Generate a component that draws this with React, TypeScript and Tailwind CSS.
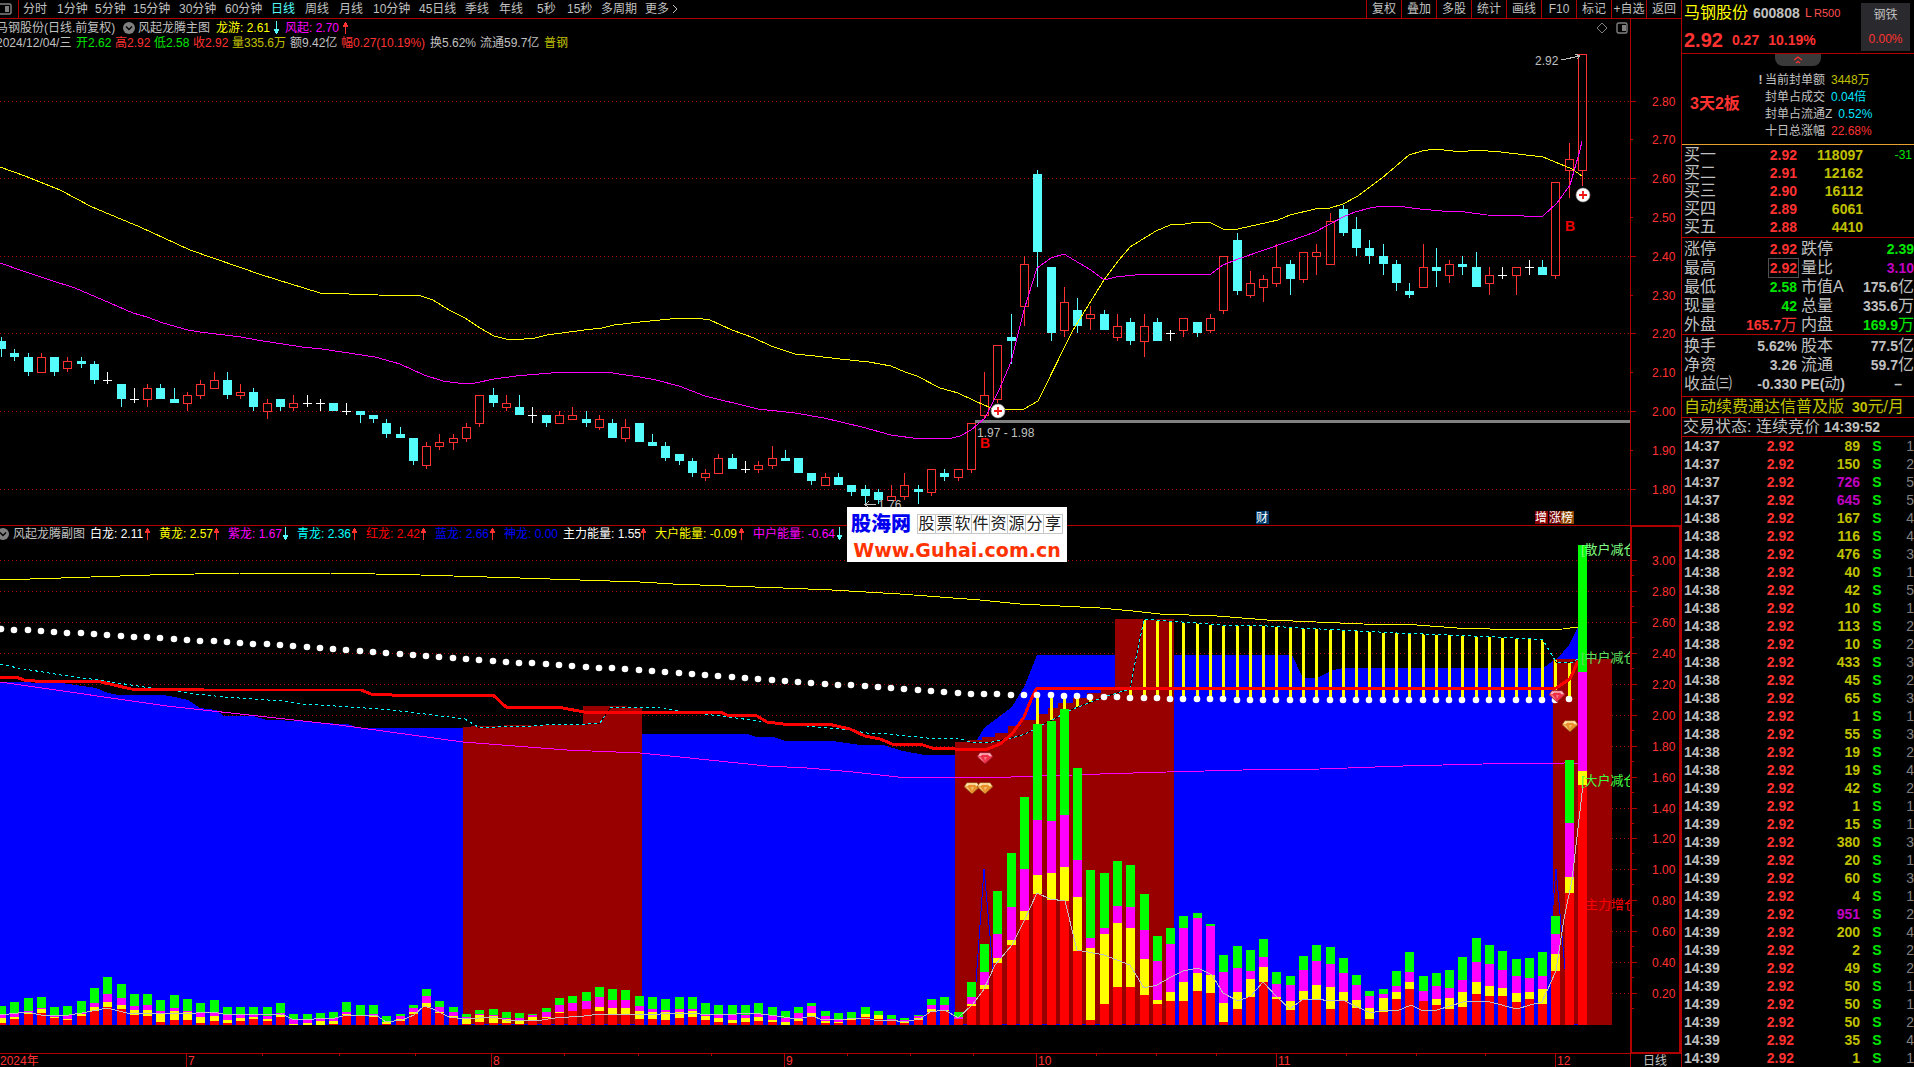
import type { ReactNode } from "react";

type Candle = [high: number, top: number, bottom: number, low: number, kind: "u" | "d" | "x"];
type Stack = [green: number, magenta: number, yellow: number, red: number];
type Point = [x: number, y: number];

const FONT = "font-['Liberation_Sans','Noto_Sans_CJK_SC',sans-serif]";

const PERIODS: [string, string][] = [
    ["分时", "w-[34px]"],
    ["1分钟", "w-[38px]"],
    ["5分钟", "w-[38px]"],
    ["15分钟", "w-[46px]"],
    ["30分钟", "w-[46px]"],
    ["60分钟", "w-[46px]"],
    ["日线", "w-[34px]"],
    ["周线", "w-[34px]"],
    ["月线", "w-[34px]"],
    ["10分钟", "w-[46px]"],
    ["45日线", "w-[46px]"],
    ["季线", "w-[34px]"],
    ["年线", "w-[38px]"],
    ["5秒", "w-[30px]"],
    ["15秒", "w-[34px]"],
    ["多周期", "w-[44px]"],
];

const TOOLS = ["复权", "叠加", "多股", "统计", "画线", "F10", "标记", "+自选", "返回"];

// prices in cents: high, body top, body bottom, low
const CANDLES: Candle[] = [
    [219, 218, 216, 214, "d"], [216, 215, 214, 213, "d"], [215, 214, 210, 209, "d"], [215, 214, 210, 210, "u"],
    [214, 214, 210, 209, "d"], [214, 213, 211, 210, "u"], [214, 213, 212, 211, "d"], [213, 212, 208, 207, "d"],
    [210, 208, 208, 207, "x"], [207, 207, 203, 201, "d"], [206, 203, 203, 202, "x"], [207, 206, 203, 201, "u"],
    [207, 206, 203, 203, "d"], [206, 203, 202, 202, "d"], [205, 204, 202, 200, "u"], [208, 207, 204, 203, "u"],
    [210, 208, 206, 206, "u"], [210, 208, 204, 203, "d"], [207, 205, 204, 203, "u"], [206, 205, 201, 200, "d"],
    [203, 202, 200, 198, "u"], [203, 203, 201, 200, "d"], [204, 202, 201, 200, "u"], [204, 202, 202, 201, "x"],
    [203, 202, 202, 200, "x"], [202, 202, 200, 200, "d"], [202, 200, 200, 199, "x"], [200, 200, 199, 197, "d"],
    [199, 199, 198, 197, "d"], [198, 197, 194, 193, "d"], [196, 194, 193, 193, "d"], [193, 193, 187, 186, "d"],
    [192, 191, 186, 185, "u"], [194, 192, 191, 190, "u"], [194, 193, 192, 190, "u"], [197, 196, 193, 192, "u"],
    [204, 204, 197, 196, "u"], [206, 204, 202, 201, "d"], [204, 202, 201, 200, "u"], [204, 201, 199, 199, "d"],
    [201, 199, 199, 197, "x"], [199, 199, 197, 196, "d"], [200, 199, 197, 197, "u"], [201, 199, 198, 198, "u"],
    [200, 198, 197, 196, "d"], [199, 198, 196, 195, "u"], [198, 197, 193, 193, "d"], [198, 196, 193, 192, "u"],
    [197, 197, 192, 192, "d"], [194, 192, 191, 191, "d"], [192, 191, 188, 187, "d"], [189, 189, 187, 186, "d"],
    [188, 187, 184, 183, "d"], [185, 184, 183, 182, "u"], [189, 188, 184, 184, "u"], [189, 188, 185, 185, "d"],
    [187, 185, 185, 184, "x"], [187, 186, 185, 184, "u"], [191, 188, 186, 185, "u"], [190, 188, 187, 187, "d"],
    [188, 188, 184, 184, "d"], [184, 184, 182, 181, "d"], [184, 183, 181, 181, "u"], [184, 183, 181, 181, "d"],
    [181, 181, 179, 178, "d"], [181, 180, 178, 176, "d"], [180, 179, 177, 176, "d"], [181, 178, 177, 177, "u"],
    [184, 181, 178, 177, "u"], [181, 180, 179, 176, "d"], [185, 185, 179, 178, "u"], [185, 184, 183, 182, "d"],
    [185, 185, 183, 182, "u"], [197, 197, 185, 184, "u"], [210, 204, 199, 198, "u"], [217, 217, 203, 202, "u"],
    [225, 219, 218, 212, "d"], [240, 238, 227, 222, "u"], [262, 261, 241, 232, "d"], [237, 237, 220, 218, "d"],
    [232, 228, 221, 219, "u"], [229, 226, 222, 220, "d"], [227, 225, 224, 221, "u"], [226, 225, 221, 221, "d"],
    [225, 222, 219, 218, "u"], [224, 223, 218, 217, "d"], [225, 222, 218, 214, "u"], [224, 223, 218, 218, "d"],
    [221, 220, 220, 218, "x"], [224, 224, 221, 219, "u"], [223, 223, 220, 219, "d"], [225, 224, 221, 220, "u"],
    [240, 240, 226, 225, "u"], [246, 244, 231, 230, "d"], [236, 233, 230, 229, "u"], [235, 234, 232, 228, "u"],
    [243, 237, 233, 232, "u"], [239, 238, 234, 230, "d"], [241, 241, 234, 233, "u"], [243, 241, 240, 235, "u"],
    [251, 249, 238, 238, "u"], [253, 252, 246, 245, "d"], [250, 247, 242, 240, "d"], [244, 242, 240, 238, "d"],
    [243, 240, 238, 235, "d"], [239, 238, 233, 231, "d"], [233, 231, 230, 229, "d"], [243, 237, 232, 232, "u"],
    [242, 237, 236, 232, "d"], [239, 238, 235, 233, "u"], [240, 238, 237, 235, "d"], [241, 237, 232, 232, "d"],
    [237, 235, 233, 230, "u"], [237, 235, 235, 234, "x"], [237, 237, 235, 230, "u"], [239, 237, 237, 235, "x"],
    [239, 237, 235, 235, "d"], [259, 259, 235, 234, "u"], [269, 265, 262, 255, "u"], [292, 292, 262, 258, "u"],
];

// cumulative column heights
const STACKS: Stack[] = [
    [19, 10, 7, 2], [23, 12, 8, 6], [27, 14, 12, 11], [28, 17, 16, 12], [18, 10, 8, 7], [19, 10, 6, 5],
    [24, 12, 11, 9], [37, 22, 18, 14], [48, 31, 23, 18], [41, 27, 20, 16], [31, 19, 15, 10], [31, 20, 15, 9],
    [25, 14, 12, 3], [30, 17, 14, 5], [26, 14, 13, 5], [22, 12, 8, 2], [25, 13, 9, 4], [18, 10, 5, 2],
    [18, 10, 7, 4], [18, 10, 8, 6], [18, 9, 6, 4], [22, 12, 10, 8], [11, 6, 1, 0], [11, 6, 2, 0],
    [12, 7, 4, 0], [13, 7, 4, 1], [23, 13, 11, 10], [20, 10, 10, 9], [20, 11, 10, 8], [9, 3, 3, 1],
    [11, 9, 6, 4], [20, 17, 13, 11], [36, 29, 22, 18], [24, 18, 13, 12], [18, 13, 9, 7], [11, 8, 6, 1],
    [15, 11, 10, 3], [16, 10, 9, 2], [13, 7, 6, 2], [12, 7, 5, 1], [11, 10, 8, 5], [17, 13, 8, 7],
    [27, 20, 13, 12], [29, 22, 14, 14], [33, 24, 16, 16], [38, 28, 18, 14], [36, 25, 17, 11], [35, 25, 17, 11],
    [29, 19, 14, 6], [28, 16, 13, 6], [26, 15, 13, 5], [28, 16, 13, 7], [28, 16, 14, 8], [22, 10, 9, 5],
    [20, 11, 7, 3], [20, 10, 5, 2], [20, 10, 7, 3], [22, 11, 8, 4], [18, 10, 5, 3], [14, 7, 3, 0],
    [18, 12, 6, 4], [22, 19, 12, 8], [14, 9, 4, 2], [12, 6, 3, 2], [13, 7, 6, 5], [18, 11, 11, 8],
    [14, 10, 10, 6], [10, 6, 5, 4], [7, 5, 3, 2], [10, 9, 7, 5], [26, 20, 16, 13], [28, 20, 15, 14],
    [13, 8, 6, 6], [43, 28, 21, 19], [81, 53, 40, 36], [134, 91, 67, 62], [172, 118, 85, 80], [228, 156, 114, 105],
    [301, 205, 150, 131], [304, 204, 152, 125], [316, 210, 158, 124], [257, 165, 128, 74], [155, 87, 77, 5], [152, 97, 91, 21],
    [164, 119, 102, 38], [160, 118, 97, 38], [131, 95, 66, 30], [89, 64, 25, 21], [97, 81, 33, 24], [109, 97, 43, 24],
    [112, 107, 52, 34], [101, 99, 50, 32], [70, 53, 22, 3], [79, 57, 33, 16], [75, 54, 46, 28], [86, 68, 58, 43],
    [53, 41, 28, 26], [49, 40, 24, 15], [69, 55, 34, 25], [80, 64, 40, 25], [78, 61, 38, 16], [67, 52, 33, 24],
    [50, 40, 25, 17], [34, 29, 17, 6], [36, 31, 27, 13], [54, 39, 33, 26], [73, 53, 43, 36], [49, 34, 24, 24],
    [52, 39, 26, 20], [55, 37, 27, 16], [68, 45, 33, 18], [87, 63, 43, 31], [80, 61, 39, 29], [74, 55, 37, 29],
    [66, 49, 32, 23], [67, 47, 33, 26], [73, 49, 36, 21], [109, 91, 71, 54], [265, 202, 148, 132], [480, 353, 254, 240],
];

const SLOW_LINE =
    "0,167 25,176 60,190 92,207 140,227 190,250 262,275 320,293 378,295 421,296 433,300 449,310 465,318 480,328 494,336 506,339 524,339 535,338 547,335 584,330 602,328 614,325 640,322 670,319 696,318 710,320 732,330 754,338 771,346 795,354 815,356 840,359 869,362 891,366 905,372 917,376 940,388 958,393 975,401 991,408 1005,409 1024,409 1038,401 1073,330 1104,280 1119,260 1130,247 1156,231 1170,225 1185,224 1198,222 1211,223 1223,229 1238,229 1278,220 1290,215 1315,209 1330,208 1343,204 1358,196 1382,178 1409,155 1422,151 1435,149 1462,152 1475,150 1501,152 1543,157 1560,164 1572,169 1582,176";
const FAST_LINE =
    "0,263 20,270 50,280 75,288 103,300 133,313 147,317 163,323 188,330 200,332 241,337 257,340 302,347 322,349 375,357 400,364 424,375 443,381 465,384 475,383 494,379 516,376 539,374 563,372 606,372 626,375 640,377 656,380 679,386 705,396 758,409 795,413 824,418 862,427 891,435 920,439 952,438 960,436 971,430 985,418 999,390 1011,362 1024,310 1037,268 1051,258 1064,254 1079,263 1091,270 1104,280 1116,277 1144,274 1171,275 1211,274 1223,265 1238,259 1290,241 1315,232 1343,217 1355,212 1370,208 1382,206 1397,206 1420,209 1442,211 1465,212 1487,215 1524,216 1543,216 1557,203 1570,185 1580,150 1582,141";

const BLUE_AREA =
    "0,682 61,683 82,686 96,688 108,693 118,695 163,695 175,697 188,700 200,708 216,710 224,716 253,716 267,720 302,721 318,723 347,724 359,728 642,728 642,734 747,734 757,737 773,737 785,741 833,741 860,745 883,745 903,751 925,755 970,755 977,740 984,728 1012,707 1025,685 1037,655 1292,655 1303,678 1317,678 1333,670 1343,668 1543,668 1553,661 1557,659 1569,645 1578,627 1583,627 1583,1025 0,1025";
const RED_AREAS = [
    "463,1025 463,727 478,726 531,725 583,724 583,706 611,706 642,707 642,1025",
    "955,1025 955,742 968,742 968,740 982,740 982,737 995,737 995,733 1008,733 1008,726 1021,726 1021,720 1037,720 1037,714 1048,714 1048,708 1058,708 1058,703 1073,703 1073,698 1087,698 1087,693 1101,693 1101,690 1115,690 1115,619 1174,619 1174,1025",
    "1553,1025 1553,659 1612,659 1612,1025",
];

const DRAGON_YELLOW =
    "0,580 61,578 150,575 240,573 330,573 420,575 520,578 640,582 673,584 726,586 783,588 832,590 900,594 980,600 1020,604 1060,606 1100,608 1133,611 1160,614 1217,616 1267,620 1293,621 1363,624 1417,625 1457,628 1523,630 1563,629 1578,627";
const DRAGON_RED =
    "0,677 16,677 24,680 35,681 96,681 110,684 131,689 204,690 361,690 371,694 392,695 493,695 506,707 563,708 584,712 720,712 727,715 757,716 767,722 783,724 828,724 850,729 865,736 880,739 892,744 920,744 932,748 955,749 985,750 1000,744 1012,734 1024,717 1033,695 1037,688 1556,688 1570,679 1578,661";
const DRAGON_PURPLE =
    "0,682 167,706 294,720 339,725 463,742 567,750 640,753 680,757 767,766 807,768 853,772 898,777 933,777 990,778 1033,776 1073,775 1100,774 1167,772 1243,770 1320,769 1403,766 1483,764 1565,763 1578,764";
const DRAGON_CYAN: Point[] = [
    [0, 664], [18, 668], [61, 675], [98, 680], [131, 685], [151, 688], [176, 691], [196, 694], [224, 697], [282, 701],
    [302, 704], [351, 707], [392, 710], [433, 715], [465, 719], [478, 727], [498, 727], [531, 726], [555, 724],
    [588, 724], [600, 723], [611, 707], [660, 707], [673, 710], [698, 713], [712, 715], [767, 722], [807, 726],
    [850, 730], [867, 733], [887, 734], [907, 736], [927, 738], [958, 738], [970, 742], [987, 743], [1012, 738],
    [1025, 734], [1050, 721], [1073, 709], [1104, 697], [1130, 689], [1137, 653], [1144, 619], [1167, 621],
    [1197, 623], [1220, 625], [1267, 626], [1300, 628], [1360, 631], [1397, 633], [1450, 635], [1497, 637],
    [1533, 639], [1543, 640], [1556, 662], [1573, 662], [1578, 659],
];
const DRAGON_WHITE: Point[] = [
    [0, 629], [94, 634], [187, 640], [300, 646], [400, 654], [480, 660], [585, 667], [640, 670], [787, 681], [973, 694],
    [1037, 695], [1104, 697], [1144, 698], [1183, 699], [1290, 700], [1543, 700], [1570, 699],
];
const ENERGY_LINE =
    "0,1015 27,1012 41,1015 69,1015 82,1013 107,1008 127,1013 143,1014 167,1013 196,1013 212,1012 229,1015 282,1014 292,1019 314,1019 335,1018 347,1015 376,1015 386,1022 402,1020 414,1015 424,1006 433,1009 449,1017 465,1019 494,1017 506,1020 535,1021 555,1018 584,1016 600,1014 626,1014 640,1015 680,1013 720,1015 753,1013 777,1016 797,1019 812,1016 823,1020 847,1019 867,1018 877,1021 892,1020 903,1022 920,1019 930,1012 945,1010 958,1018 973,1004 984,989 995,965 1012,945 1025,919 1037,893 1050,899 1065,901 1077,950 1104,955 1117,960 1130,965 1144,988 1157,985 1171,977 1183,971 1198,968 1212,975 1223,993 1238,1001 1251,996 1263,982 1277,997 1290,1009 1303,999 1317,999 1330,1001 1343,1000 1357,1007 1371,1013 1383,1010 1397,1011 1411,1005 1423,1011 1437,1010 1463,1002 1477,1001 1490,1002 1517,1009 1530,1005 1542,1002 1556,971 1564,919 1572,880 1583,785";

const LEGEND: [string, string, string, "up" | "down" | ""][] = [
    ["白龙: 2.11", "text-white", "w-[69px]", "up"],
    ["黄龙: 2.57", "text-[#ffff00]", "w-[69px]", "up"],
    ["紫龙: 1.67", "text-[#ff00ff]", "w-[69px]", "down"],
    ["青龙: 2.36", "text-[#00ffff]", "w-[69px]", "up"],
    ["红龙: 2.42", "text-[#ff0000]", "w-[69px]", "up"],
    ["蓝龙: 2.66", "text-[#0000ff]", "w-[69px]", "up"],
    ["神龙: 0.00", "text-[#0000ff]", "w-[59px]", ""],
    ["主力能量: 1.55", "text-white", "w-[92px]", "up"],
    ["大户能量: -0.09", "text-[#ffff00]", "w-[98px]", "up"],
    ["中户能量: -0.64", "text-[#ff00ff]", "w-[98px]", "down"],
];

const BIDS = [
    ["买一", "2.92", "118097", "-31"],
    ["买二", "2.91", "12162", ""],
    ["买三", "2.90", "16112", ""],
    ["买四", "2.89", "6061", ""],
    ["买五", "2.88", "4410", ""],
];

const RED = "text-[#ff3232]";
const GREEN = "text-[#00e600]";
const GREY = "text-[#c0c0c0]";
const GOLD = "text-[#c0c000]";
const PURPLE = "text-[#c000c0]";

const STATS = [
    ["涨停", "2.92", RED, "跌停", "2.39", GREEN],
    ["最高", "2.92", RED, "量比", "3.10", PURPLE],
    ["最低", "2.58", GREEN, "市值A", "175.6亿", GREY],
    ["现量", "42", GREEN, "总量", "335.6万", GREY],
    ["外盘", "165.7万", RED, "内盘", "169.9万", GREEN],
];
const FUNDAMENTALS = [
    ["换手", "5.62%", GREY, "股本", "77.5亿", GREY],
    ["净资", "3.26", GREY, "流通", "59.7亿", GREY],
    ["收益㈢", "-0.330", GREY, "PE(动)", "–", GREY],
];

const TRADES: [string, number, number][] = [
    ["14:37", 89, 1], ["14:37", 150, 2], ["14:37", 726, 5], ["14:37", 645, 5], ["14:38", 167, 4], ["14:38", 116, 4],
    ["14:38", 476, 3], ["14:38", 40, 1], ["14:38", 42, 5], ["14:38", 10, 1], ["14:38", 113, 2], ["14:38", 10, 2],
    ["14:38", 433, 3], ["14:38", 45, 2], ["14:38", 65, 3], ["14:38", 1, 1], ["14:38", 55, 3], ["14:38", 19, 2],
    ["14:38", 19, 4], ["14:39", 42, 2], ["14:39", 1, 1], ["14:39", 15, 1], ["14:39", 380, 3], ["14:39", 20, 1],
    ["14:39", 60, 3], ["14:39", 4, 1], ["14:39", 951, 2], ["14:39", 200, 4], ["14:39", 2, 2], ["14:39", 49, 2],
    ["14:39", 50, 1], ["14:39", 50, 1], ["14:39", 50, 2], ["14:39", 35, 4], ["14:39", 1, 1],
];

const barX = (i: number) => Math.floor(1.5 + i * 13.286);
const priceY = (cents: number) => Math.round(411 + (200 - cents) * 3.88);
const valueY = (value: number) => Math.round(1024 - value * 154.6);

function interpolate(points: Point[], x: number) {
    for (let i = 1; i < points.length; i++) {
        const [x0, y0] = points[i - 1];
        const [x1, y1] = points[i];
        if (x <= x1) return Math.round(y0 + ((y1 - y0) * (x - x0)) / (x1 - x0));
    }
    return points[points.length - 1][1];
}

function Arrow({ dir }: { dir: "up" | "down" }) {
    return dir === "up" ? (
        <svg viewBox="0 0 6 14" className="w-[6px] h-[14px] shrink-0" shapeRendering="crispEdges">
            <path d="M2 1h1v12h-1zM1 2h3v2h-3zM0 4h5v2h-5z" fill="#ff3232" />
        </svg>
    ) : (
        <svg viewBox="0 0 6 14" className="w-[6px] h-[14px] shrink-0" shapeRendering="crispEdges">
            <path d="M2 0h1v13h-1zM1 10h3v2h-3zM0 8h5v2h-5z" fill="#54fcfc" />
        </svg>
    );
}

function CollapseButton() {
    return (
        <button aria-label="展开" className="size-3 rounded-full bg-[#808080] flex items-center justify-center shrink-0">
            <svg viewBox="0 0 8 6" className="w-2 h-[6px]">
                <path d="M1 1.5L4 4.5L7 1.5" fill="none" stroke="#000" strokeWidth="1.4" />
            </svg>
        </button>
    );
}

function Signal({ x, y }: { x: number; y: number }) {
    return (
        <g>
            <circle cx={x} cy={y} r="7" fill="#fff" stroke="#888" strokeWidth="0.6" />
            <path d={`M${x - 4} ${y}h8M${x} ${y - 4}v8`} stroke="#f01414" strokeWidth="1.8" />
        </g>
    );
}

function Gem({ x, y, tone }: { x: number; y: number; tone: "red" | "gold" }) {
    const [edge, body, light] = tone === "red" ? ["#7a2030", "#ef2f48", "#ffb4bc"] : ["#7a4818", "#e8902c", "#ffe6ae"];
    return (
        <g transform={`translate(${x - 8} ${y - 6})`}>
            <path d="M3 .5h10l3 4.2L8 12L0 4.7z" fill={body} stroke={edge} strokeWidth="0.7" />
            <path d="M3 1.200h10l2 3h-2.500L11 2.800H5L3.500 4.200H1z" fill={light} />
            <path d="M1.500 5.200L7.500 10.800L4 5.200z" fill={light} opacity="0.6" />
            <path d="M7 5L8 9L10 5z" fill={light} opacity="0.5" />
        </g>
    );
}

function Badge({ x, fill, children }: { x: number; fill: string; children: ReactNode }) {
    return (
        <g>
            <rect x={x} y="511" width="13" height="13" fill={fill} />
            <text x={x} y="522" fontSize="12" fill="#fff">
                {children}
            </text>
        </g>
    );
}

function PriceChart() {
    return (
        <svg viewBox="0 49 1681 476" className="block w-full h-auto" role="img" aria-label="风起龙腾主图">
            <g shapeRendering="crispEdges">
                {[280, 260, 240, 220, 200, 180].map((p) => (
                    <line key={p} x1="0" x2="1631" y1={priceY(p) + 0.5} y2={priceY(p) + 0.5} stroke="#b00000" strokeDasharray="1 3" />
                ))}
                <rect x="1630" y="49" width="1" height="476" fill="#b00000" />
                {[280, 270, 260, 250, 240, 230, 220, 210, 200, 190, 180].map((p) => (
                    <rect key={p} x="1631" y={priceY(p)} width={p % 20 === 0 ? 5 : 2} height="1" fill="#b00000" />
                ))}
                <rect x="975" y="420" width="655" height="3" fill="#808080" />
                {CANDLES.map(([high, top, bottom, low, kind], i) => {
                    const x = barX(i);
                    const [h, t, b, l] = [high, top, bottom, low].map(priceY);
                    if (kind === "x") return <path key={i} d={`M${x} ${h}h1v${l - h}h-1zM${x - 4} ${t}h9v1h-9z`} fill="#fff" />;
                    if (kind === "d") return <path key={i} d={`M${x} ${h}h1v${l - h}h-1zM${x - 4} ${t}h9v${b - t}h-9z`} fill="#54fcfc" />;
                    return (
                        <g key={i}>
                            <path d={`M${x} ${h}h1v${t - h}h-1zM${x} ${b}h1v${l - b}h-1z`} fill="#ff3232" />
                            <rect x={x - 3.5} y={t + 0.5} width="8" height={b - t} fill="none" stroke="#ff3232" />
                        </g>
                    );
                })}
                <polyline points={SLOW_LINE} fill="none" stroke="#ffff00" />
                <polyline points={FAST_LINE} fill="none" stroke="#ff00ff" />
                <path d="M865 504.500H876M869 501L865 504.500L869 508M1561 60L1580 56M1575 54L1580 56L1577 59" fill="none" stroke="#c0c0c0" />
            </g>
            <g fontSize="12" fill="#ff3232">
                {[280, 270, 260, 250, 240, 230, 220, 210, 200, 190, 180].map((p) => (
                    <text key={p} x="1652" y={priceY(p) + 5}>
                        {(p / 100).toFixed(2)}
                    </text>
                ))}
            </g>
            <g fontSize="12" fill="#c0c0c0">
                <text x="1535" y="65">2.92</text>
                <text x="977" y="437">1.97 - 1.98</text>
                <text x="878" y="509">1.76</text>
            </g>
            <g fontSize="14" fontWeight="bold" fill="#f00000">
                <text x="980" y="448">B</text>
                <text x="1565" y="231">B</text>
            </g>
            <Signal x={998} y={411} />
            <Signal x={1583} y={195} />
            <Badge x={1256} fill="#003a6c">财</Badge>
            <Badge x={1535} fill="#8b0000">增</Badge>
            <Badge x={1549} fill="#700000">涨</Badge>
            <Badge x={1561} fill="#8c4600">榜</Badge>
        </svg>
    );
}

function EnergyChart() {
    const levels = Array.from({ length: 15 }, (_, i) => (15 - i) * 0.2);
    return (
        <svg viewBox="0 542 1681 525" className="block w-full h-auto" role="img" aria-label="风起龙腾副图">
            <g shapeRendering="crispEdges">
                {levels.map((v) => (
                    <line key={v} x1="0" x2="1631" y1={valueY(v) + 0.5} y2={valueY(v) + 0.5} stroke="#b00000" strokeDasharray="1 3" />
                ))}
                <polygon points={BLUE_AREA} fill="#0000ff" />
                {RED_AREAS.map((points) => (
                    <polygon key={points} points={points} fill="#980000" />
                ))}
                <polyline points="0,1024.500 973,1024.500 984,869 998,1024.500 1543,1024.500 1556,869 1570,1024.500 1583,1024.500" fill="none" stroke="#0000ff" />
                {CANDLES.map((_, i) => {
                    if (i < 78 || i > 118 || i === 83 || i === 84) return null;
                    const a = interpolate(DRAGON_CYAN, barX(i));
                    const b = interpolate(DRAGON_WHITE, barX(i));
                    return <rect key={i} x={barX(i) - 1} y={Math.min(a, b)} width="3" height={Math.abs(a - b)} fill="#ffff00" />;
                })}
                <polyline points={DRAGON_YELLOW} fill="none" stroke="#ffff00" />
                <polyline points={DRAGON_CYAN.join(" ")} fill="none" stroke="#000" />
                <polyline points={DRAGON_CYAN.join(" ")} fill="none" stroke="#00ffff" strokeDasharray="3 3" />
                <polyline points={DRAGON_PURPLE} fill="none" stroke="#ff00ff" />
                <polyline points={DRAGON_RED} fill="none" stroke="#ff0000" strokeWidth="3" />
            </g>
            {CANDLES.slice(0, 119).map((_, i) => (
                <circle key={i} cx={barX(i)} cy={interpolate(DRAGON_WHITE, barX(i))} r="3.300" fill="#fff" />
            ))}
            <g shapeRendering="crispEdges">
                {STACKS.map(([green, magenta, yellow, red], i) => {
                    const x = barX(i) - 4;
                    return (
                        <g key={i}>
                            <rect x={x} y={1025 - green} width="9" height={green - magenta} fill="#00ff00" />
                            <rect x={x} y={1025 - magenta} width="9" height={magenta - yellow} fill="#ff00ff" />
                            <rect x={x} y={1025 - yellow} width="9" height={yellow - red} fill="#ffff00" />
                            <rect x={x} y={1025 - red} width="9" height={red} fill="#ff0000" />
                        </g>
                    );
                })}
                <polyline points={ENERGY_LINE} fill="none" stroke="#c0c0c0" />
            </g>
            <Gem x={985} y={758} tone="red" />
            <Gem x={972} y={788} tone="gold" />
            <Gem x={985} y={788} tone="gold" />
            <Gem x={1557} y={696} tone="red" />
            <Gem x={1570} y={726} tone="gold" />
            <g fontSize="13">
                <text x="1581" y="554" fill="#80ff80">[散户减仓</text>
                <text x="1581" y="662" fill="#60e060">[中户减仓</text>
                <text x="1581" y="785" fill="#40ff40">[大户减仓</text>
                <text x="1585" y="909" fill="#ff0000">主力增仓</text>
            </g>
            <g shapeRendering="crispEdges">
                <rect x="1632" y="542" width="49" height="525" fill="#000" />
                <path d="M1630 542h2v512h-2zM1679 542h2v512h-2zM1630 1052h51v2h-51zM0 1053h1630v1h-1630zM1630 1054h1v13h-1z" fill="#b00000" />
                {levels.map((v) => (
                    <path key={v} d={`M1632 ${valueY(v)}h5v1h-5zM1632 ${valueY(v) + 15}h2v1h-2z`} fill="#b00000" />
                ))}
                {[186, 491, 784, 1036, 1276, 1555].map((x) => (
                    <rect key={x} x={x} y="1053" width="1" height="14" fill="#b00000" />
                ))}
                {[262, 339, 415, 564, 638, 711, 847, 910, 973, 1096, 1156, 1216, 1346, 1416, 1485].map((x) => (
                    <rect key={x} x={x} y="1053" width="1" height="3" fill="#b00000" />
                ))}
            </g>
            <g fontSize="12" fill="#ff3232">
                {levels.map((v) => (
                    <text key={v} x="1652" y={valueY(v) + 5}>
                        {v.toFixed(2)}
                    </text>
                ))}
                <text x="0" y="1065">2024年</text>
                <text x="188" y="1065">7</text>
                <text x="493" y="1065">8</text>
                <text x="786" y="1065">9</text>
                <text x="1038" y="1065">10</text>
                <text x="1278" y="1065">11</text>
                <text x="1557" y="1065">12</text>
                <text x="1643" y="1065" fill="#c0c0c0">日线</text>
            </g>
        </svg>
    );
}

function Amount({ value }: { value: string }) {
    const unit = /[万亿]$/.test(value) ? value.slice(-1) : "";
    return (
        <>
            {unit ? value.slice(0, -1) : value}
            {unit && <span className="font-normal text-base leading-none">{unit}</span>}
        </>
    );
}

function StatTable({ rows }: { rows: string[][] }) {
    return (
        <table className="w-full table-fixed text-sm leading-none">
            <colgroup>
                <col className="w-[50px]" />
                <col className="w-[65px]" />
                <col className="w-[49px]" />
                <col />
            </colgroup>
            <tbody>
                {rows.map(([label, value, color, label2, value2, color2]) => (
                    <tr key={label} className="h-[19px]">
                        <th className="p-0 pl-[2px] text-left font-normal text-base leading-none whitespace-nowrap">{label}</th>
                        <td className={`p-0 text-right font-bold whitespace-nowrap ${color}`}>
                            <span className={label === "最高" ? "outline outline-[#505050] outline-offset-1" : ""}>
                                <Amount value={value} />
                            </span>
                        </td>
                        <th className="p-0 pl-1 text-left font-normal text-base leading-none whitespace-nowrap">
                            {label2 === "PE(动)" ? (
                                <>
                                    <b className="text-sm leading-none">PE(</b>动<b className="text-sm leading-none">)</b>
                                </>
                            ) : (
                                label2
                            )}
                        </th>
                        <td className={`p-0 text-right font-bold whitespace-nowrap ${color2} ${value2 === "–" ? "pr-3" : ""}`}>
                            <Amount value={value2} />
                        </td>
                    </tr>
                ))}
            </tbody>
        </table>
    );
}

function QuotePanel() {
    return (
        <aside className="w-[233px] shrink-0 border-l border-[#b00000] text-[#c0c0c0]">
            <header className="flex justify-between h-[54px] border-b border-[#b00000] pl-[2px] pr-1 pt-[3px]">
                <div>
                    <div className="flex h-5 items-center">
                        <h1 className="w-[69px] text-base leading-none text-[#ffff00]">马钢股份</h1>
                        <b className="w-[52px] text-sm leading-none">600808</b>
                        <span className="w-[9px] text-xs leading-none text-[#ff5050]">L</span>
                        <span className="text-[11px] leading-none text-[#ff5050]">R500</span>
                    </div>
                    <div className="flex h-[34px] items-center gap-[9px] text-sm font-bold text-[#ff3232]">
                        <span className="text-xl">2.92</span>
                        <span>0.27</span>
                        <span>10.19%</span>
                    </div>
                </div>
                <button className="flex w-[49px] h-12 flex-col items-center justify-between bg-[#2a2a2e] py-1 text-xs">
                    <span>钢铁</span>
                    <span className="text-[#ff3232]">0.00%</span>
                </button>
            </header>

            <div className="h-[91px] border-b border-[#e8a030]">
                <button aria-label="收起" className="flex mx-auto w-[46px] h-3 items-center justify-center rounded-b-lg bg-[#3a3a3a]">
                    <svg viewBox="0 0 10 8" className="w-[10px] h-2">
                        <path d="M1 4L5 1L9 4M3 7L5 5.500L7 7" fill="none" stroke="#ff3232" strokeWidth="1.300" />
                    </svg>
                </button>
                <div className="flex items-center h-[76px]">
                    <strong className="w-[74px] pl-2 text-base leading-none whitespace-nowrap text-[#ff3232]">3天2板</strong>
                    <ul className="text-xs leading-[17px] pt-1">
                        <li className="flex">
                            <span className="w-[9px] text-center font-bold">!</span>当前封单额
                            <span className={`pl-[6px] ${GOLD}`}>3448万</span>
                        </li>
                        <li className="pl-[9px]">
                            封单占成交<span className="pl-[6px] text-[#00e5ff]">0.04倍</span>
                        </li>
                        <li className="pl-[9px]">
                            封单占流通Z<span className="pl-[6px] text-[#00e5ff]">0.52%</span>
                        </li>
                        <li className="pl-[9px]">
                            十日总涨幅<span className="pl-[6px] text-[#ff3232]">22.68%</span>
                        </li>
                    </ul>
                </div>
            </div>

            <div className="py-px border-b border-[#b00000]">
                <table className="w-full table-fixed text-sm leading-none">
                    <colgroup>
                        <col className="w-[50px]" />
                        <col className="w-[65px]" />
                        <col className="w-[66px]" />
                        <col />
                    </colgroup>
                    <tbody>
                        {BIDS.map(([label, price, volume, change]) => (
                            <tr key={label} className="h-[18px]">
                                <th className="p-0 pl-[2px] text-left font-normal text-base leading-none">{label}</th>
                                <td className="p-0 text-right font-bold text-[#ff3232]">{price}</td>
                                <td className={`p-0 text-right font-bold ${GOLD}`}>{volume}</td>
                                <td className="p-0 pr-[2px] text-right text-xs leading-none text-[#00e600]">{change}</td>
                            </tr>
                        ))}
                    </tbody>
                </table>
            </div>

            <div className="pt-px border-b border-[#b00000]">
                <StatTable rows={STATS} />
            </div>
            <div className="pt-px pb-[3px] border-b border-[#b00000]">
                <StatTable rows={FUNDAMENTALS} />
            </div>

            <a href="#renew" className={`flex h-[21px] items-center gap-2 border-b border-[#b00000] pl-[2px] text-base leading-none whitespace-nowrap ${GOLD}`}>
                <span>自动续费通达信普及版</span>
                <span>
                    <b className="text-sm leading-none">30</b>元/月
                </span>
            </a>
            <p className="flex h-[19px] items-center gap-1 border-b border-[#b00000] pl-px text-base leading-none whitespace-nowrap">
                <span>交易状态: 连续竞价</span>
                <b className="text-sm leading-none">14:39:52</b>
            </p>

            <table className="w-full table-fixed text-sm leading-none font-bold">
                <colgroup>
                    <col className="w-[60px]" />
                    <col className="w-[52px]" />
                    <col className="w-[66px]" />
                    <col className="w-[34px]" />
                    <col />
                </colgroup>
                <tbody>
                    {TRADES.map(([time, volume, orders], i) => (
                        <tr key={i} className="h-[18px]">
                            <td className="p-0 pl-[2px]">{time}</td>
                            <td className="p-0 text-right text-[#ff3232]">2.92</td>
                            <td className={`p-0 text-right ${volume > 500 ? PURPLE : GOLD}`}>{volume}</td>
                            <td className="p-0 text-center text-[#00e600]">S</td>
                            <td className="p-0 text-right font-normal text-[#808080]">{orders}</td>
                        </tr>
                    ))}
                </tbody>
            </table>
        </aside>
    );
}

export default function App() {
    return (
        <div className={`flex min-h-screen overflow-hidden bg-black text-xs leading-none text-[#c0c0c0] ${FONT}`}>
            <main className="relative flex-1 min-w-0">
                <nav className="flex h-[19px] justify-between border-b border-[#b00000] whitespace-nowrap">
                    <div className="flex">
                        <button aria-label="侧栏" className="flex w-[19px] items-center border-r border-[#b00000]">
                            <svg viewBox="0 0 12 12" className="size-3">
                                <rect x="-1" y="1" width="12" height="10" rx="1.500" fill="none" stroke="#808080" strokeWidth="1.500" />
                                <rect x="5" y="3" width="4" height="6" fill="#808080" />
                            </svg>
                        </button>
                        <div className="flex pl-1">
                            {PERIODS.map(([label, width]) => (
                                <button key={label} className={`${width} text-left ${label === "日线" ? "text-[#54fcfc]" : ""}`}>
                                    {label}
                                </button>
                            ))}
                            <button className="flex items-center gap-[3px]">
                                更多
                                <svg viewBox="0 0 6 10" className="w-[6px] h-[10px]">
                                    <path d="M1 1L5 5L1 9" fill="none" stroke="#c0c0c0" />
                                </svg>
                            </button>
                        </div>
                    </div>
                    <div className="flex">
                        {TOOLS.map((label) => (
                            <button key={label} className="w-[35px] border-l border-[#b00000] text-center">
                                {label}
                            </button>
                        ))}
                    </div>
                </nav>

                <div className="flex">
                    <div className="flex-1 min-w-0 whitespace-nowrap">
                        <div className="flex h-[17px] items-center justify-between">
                            <div className="flex items-center">
                                <span className="-ml-1 w-[127px]">马钢股份(日线.前复权)</span>
                                <CollapseButton />
                                <span className="w-[81px] pl-[3px]">风起龙腾主图</span>
                                <span className="flex w-[69px] gap-1 items-center text-[#ffff00]">
                                    龙游: 2.61 <Arrow dir="down" />
                                </span>
                                <span className="flex gap-1 items-center text-[#ff00ff]">
                                    风起: 2.70 <Arrow dir="up" />
                                </span>
                            </div>
                            <div className="flex items-center gap-2 pr-[2px]">
                                <svg viewBox="0 0 12 12" className="size-3">
                                    <path d="M6 1L11 6L6 11L1 6z" fill="none" stroke="#808080" />
                                </svg>
                                <svg viewBox="0 0 12 12" className="size-3">
                                    <rect x="1" y="1" width="10" height="10" rx="1.500" fill="none" stroke="#808080" strokeWidth="1.400" />
                                    <rect x="6" y="3" width="4" height="6" fill="#808080" />
                                </svg>
                            </div>
                        </div>
                        <div className="flex h-[13px] items-center">
                            <span className="-ml-1 w-20">2024/12/04/三</span>
                            <span className={`w-[39px] ${GREEN}`}>开2.62</span>
                            <span className={`w-[39px] ${RED}`}>高2.92</span>
                            <span className={`w-[39px] ${GREEN}`}>低2.58</span>
                            <span className={`w-[39px] ${RED}`}>收2.92</span>
                            <span className={`w-[58px] ${GOLD}`}>量335.6万</span>
                            <span className="w-[51px]">额9.42亿</span>
                            <span className={`w-[89px] ${RED}`}>幅0.27(10.19%)</span>
                            <span className="w-[50px]">换5.62%</span>
                            <span className="w-16">流通59.7亿</span>
                            <span className={GOLD}>普钢</span>
                        </div>
                    </div>
                    <div className="w-[51px] border-l border-[#b00000]"></div>
                </div>
                <PriceChart />

                <div className="flex h-[17px]">
                    <div className="flex flex-1 min-w-0 items-center border-t border-[#b00000] whitespace-nowrap">
                        <div className="-ml-[3px] flex w-[93px] items-center gap-1">
                            <CollapseButton />
                            <span>风起龙腾副图</span>
                        </div>
                        {LEGEND.map(([label, color, width, dir]) => (
                            <span key={label} className={`flex items-center justify-between pr-2 ${width} ${color}`}>
                                {label}
                                {dir && <Arrow dir={dir} />}
                            </span>
                        ))}
                    </div>
                    <div className="w-[51px] border-2 border-b-0 border-[#b00000]"></div>
                </div>
                <EnergyChart />

                <a href="#guhai" className="absolute top-[507px] left-[847px] w-[220px] h-[55px] bg-white whitespace-nowrap">
                    <div className="flex h-[34px] items-center justify-between px-1">
                        <span className="text-xl leading-none font-black text-[#0000f0]">股海网</span>
                        <span className="flex border border-[#c8c8c8] divide-x divide-[#c8c8c8] text-base leading-[18px] text-[#202020]">
                            {[..."股票软件资源分享"].map((char) => (
                                <span key={char} className="w-[18px] text-center">
                                    {char}
                                </span>
                            ))}
                        </span>
                    </div>
                    <div className="text-center text-[19px] leading-none font-black text-[#ff3300] font-['DejaVu_Sans',sans-serif]">Www.Guhai.com.cn</div>
                </a>
            </main>
            <QuotePanel />
        </div>
    );
}
